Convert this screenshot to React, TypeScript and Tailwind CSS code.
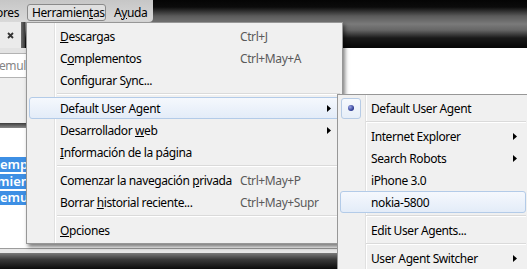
import type { ReactNode } from "react"

type RowProps = {
  children: ReactNode
  shortcut?: string
  arrow?: boolean
  active?: boolean
  radio?: boolean
}

const Arrow = () => (
  <svg width="4" height="7" viewBox="0 0 4 7" className="ml-auto shrink-0">
    <path d="M0 0L4 3.5L0 7Z" fill="#000" />
  </svg>
)

function Row({ children, shortcut, arrow, active, radio }: RowProps) {
  return (
    <div
      className={`flex h-[22px] items-center rounded-[3px] border pr-[8px] ${
        active
          ? "border-[#b3cbe8] bg-[linear-gradient(to_bottom,#f5f8fd,#e3ecf8)]"
          : "border-transparent"
      }`}
    >
      <div className="flex h-full w-[30px] shrink-0 items-center">
        {radio && (
          <div className="flex h-[21px] w-[20px] items-center justify-center rounded-[3px] border border-[#b6cbe5] bg-[linear-gradient(to_bottom,#f6f9fd,#e6eef8)]">
            <div className="h-[6px] w-[6px] rounded-full bg-[radial-gradient(circle_at_35%_35%,#9aa6e6,#28348c_70%)]" />
          </div>
        )}
      </div>
      <span className={`whitespace-nowrap pt-px ${shortcut ? "w-[180px] shrink-0" : "flex-1"}`}>{children}</span>
      {shortcut && <span className="whitespace-nowrap pt-px text-[#5a5a5a]">{shortcut}</span>}
      {arrow && <Arrow />}
    </div>
  )
}

const Sep = ({ inset }: { inset: string }) => (
  <div className="flex h-[6px] flex-col justify-center">
    <div className={`${inset} h-[2px] border-t border-[#dadada] bg-white`} />
  </div>
)

export default function App() {
  return (
    <div className="relative h-[269px] w-[527px] overflow-hidden bg-white font-['Noto_Sans',sans-serif] text-[12px] tracking-[-0.4px] text-black">
      {/* glass top: menubar + tab strip */}
      <div className="h-[48px] bg-[linear-gradient(to_bottom,#050505_0px,#0b0b0b_7px,#5a5a5a_16px,#7a7a7a_24px,#666_30px,#1a1a1a_38px,#080808_47px)]">
        <div className="flex h-[22px]">
          <div className="flex w-[153px] items-center rounded-br-[4px] bg-[linear-gradient(to_bottom,#c6c6c6,#d9d9d9)] pt-[3px]">
            <div className="flex w-[27px] shrink-0 justify-end overflow-hidden pr-[8px]">
              <span>ores</span>
            </div>
            <div className="flex h-[17px] w-[79px] shrink-0 items-center rounded-[3px] border border-[#8a8a8a] bg-[#e0e0e0] px-[4px]">
              Herramien<u>t</u>as
            </div>
            <div className="ml-[8px]">
              A<u>y</u>uda
            </div>
          </div>
        </div>
        <div className="flex h-[26px]">
          <div className="flex w-[21px] items-center justify-center bg-[#ebebeb]">
            <svg width="7" height="7" viewBox="0 0 7 7">
              <path d="M1 1L6 6M6 1L1 6" stroke="#333" strokeWidth="1.8" />
            </svg>
          </div>
          <div className="w-[4px] bg-[linear-gradient(to_right,#6d6d6d,#3a3a3a)]" />
        </div>
      </div>

      {/* page body */}
      <div className="flex h-[200px]">
        <div className="flex w-[26px] flex-col">
          <div className="h-[5px] bg-[#e3e3e3]" />
          <div className="flex h-[25px] items-center overflow-hidden border-y border-[#b3b3b3] bg-white">
            <span className="-ml-[1px] text-[#858585]">emula</span>
          </div>
          <div className="h-[45px] bg-[#efefef]" />
          <div className="h-[5px] bg-[linear-gradient(to_bottom,#3c3c3c,#8a8a8a)]" />
          <div className="flex flex-1 flex-col overflow-hidden bg-white pt-[29px] text-[13px] font-semibold tracking-normal text-white">
            <div className="flex h-[15px] items-center bg-[#3d8fe4]"><span>empo</span></div>
            <div className="mt-[2px] flex h-[15px] items-center bg-[#3d8fe4]"><span className="-ml-[3px]">mien</span></div>
            <div className="mt-[2px] flex h-[14px] items-center bg-[#3d8fe4]"><span>emul</span></div>
          </div>
        </div>
        <div className="flex-1 bg-white" />
      </div>
      <div className="h-px bg-[#9c9c9c]" />
      <div className="h-[4px] bg-[#e8e8e8]" />
      <div className="h-[16px] bg-[linear-gradient(to_bottom,#7a7a7a,#3a3a3a_40%,#0c0c0c)]" />

      {/* Herramientas menu */}
      <div className="absolute left-[26px] top-[22px] h-[222px] w-[317px] border border-[#979797] bg-[linear-gradient(to_right,#f0f0f0_27px,#e0e0e0_27px,#e0e0e0_28px,#fff_28px,#fff_29px,#f0f0f0_29px)] p-[2px] shadow-[2px_3px_4px_rgba(0,0,0,0.5)]">
        <Row shortcut="Ctrl+J"><u>D</u>escargas</Row>
        <Row shortcut="Ctrl+May+A">C<u>o</u>mplementos</Row>
        <Row>Configurar Sync...</Row>
        <Sep inset="ml-[28px]" />
        <Row active arrow>Default User Agent</Row>
        <Row arrow>Desarrollador <u>w</u>eb</Row>
        <Row><u>I</u>nformación de la página</Row>
        <Sep inset="ml-[28px]" />
        <Row shortcut="Ctrl+May+P">Comenzar la navegación <u>p</u>rivada</Row>
        <Row shortcut="Ctrl+May+Supr">Borrar <u>h</u>istorial reciente...</Row>
        <Sep inset="ml-[28px]" />
        <Row><u>O</u>pciones</Row>
      </div>

      {/* Default User Agent submenu */}
      <div className="absolute left-[337px] top-[94px] h-[190px] w-[192px] border border-[#979797] bg-[linear-gradient(to_right,#f0f0f0_27px,#e0e0e0_27px,#e0e0e0_28px,#fff_28px,#fff_29px,#f0f0f0_29px)] p-[2px]">
        <Row radio>Default User Agent</Row>
        <Sep inset="ml-[26px]" />
        <Row arrow>Internet Explorer</Row>
        <Row arrow>Search Robots</Row>
        <Row>iPhone 3.0</Row>
        <Row active>nokia-5800</Row>
        <Sep inset="ml-[26px]" />
        <Row>Edit User Agents...</Row>
        <Sep inset="ml-[26px]" />
        <Row arrow>User Agent Switcher</Row>
      </div>
    </div>
  )
}
